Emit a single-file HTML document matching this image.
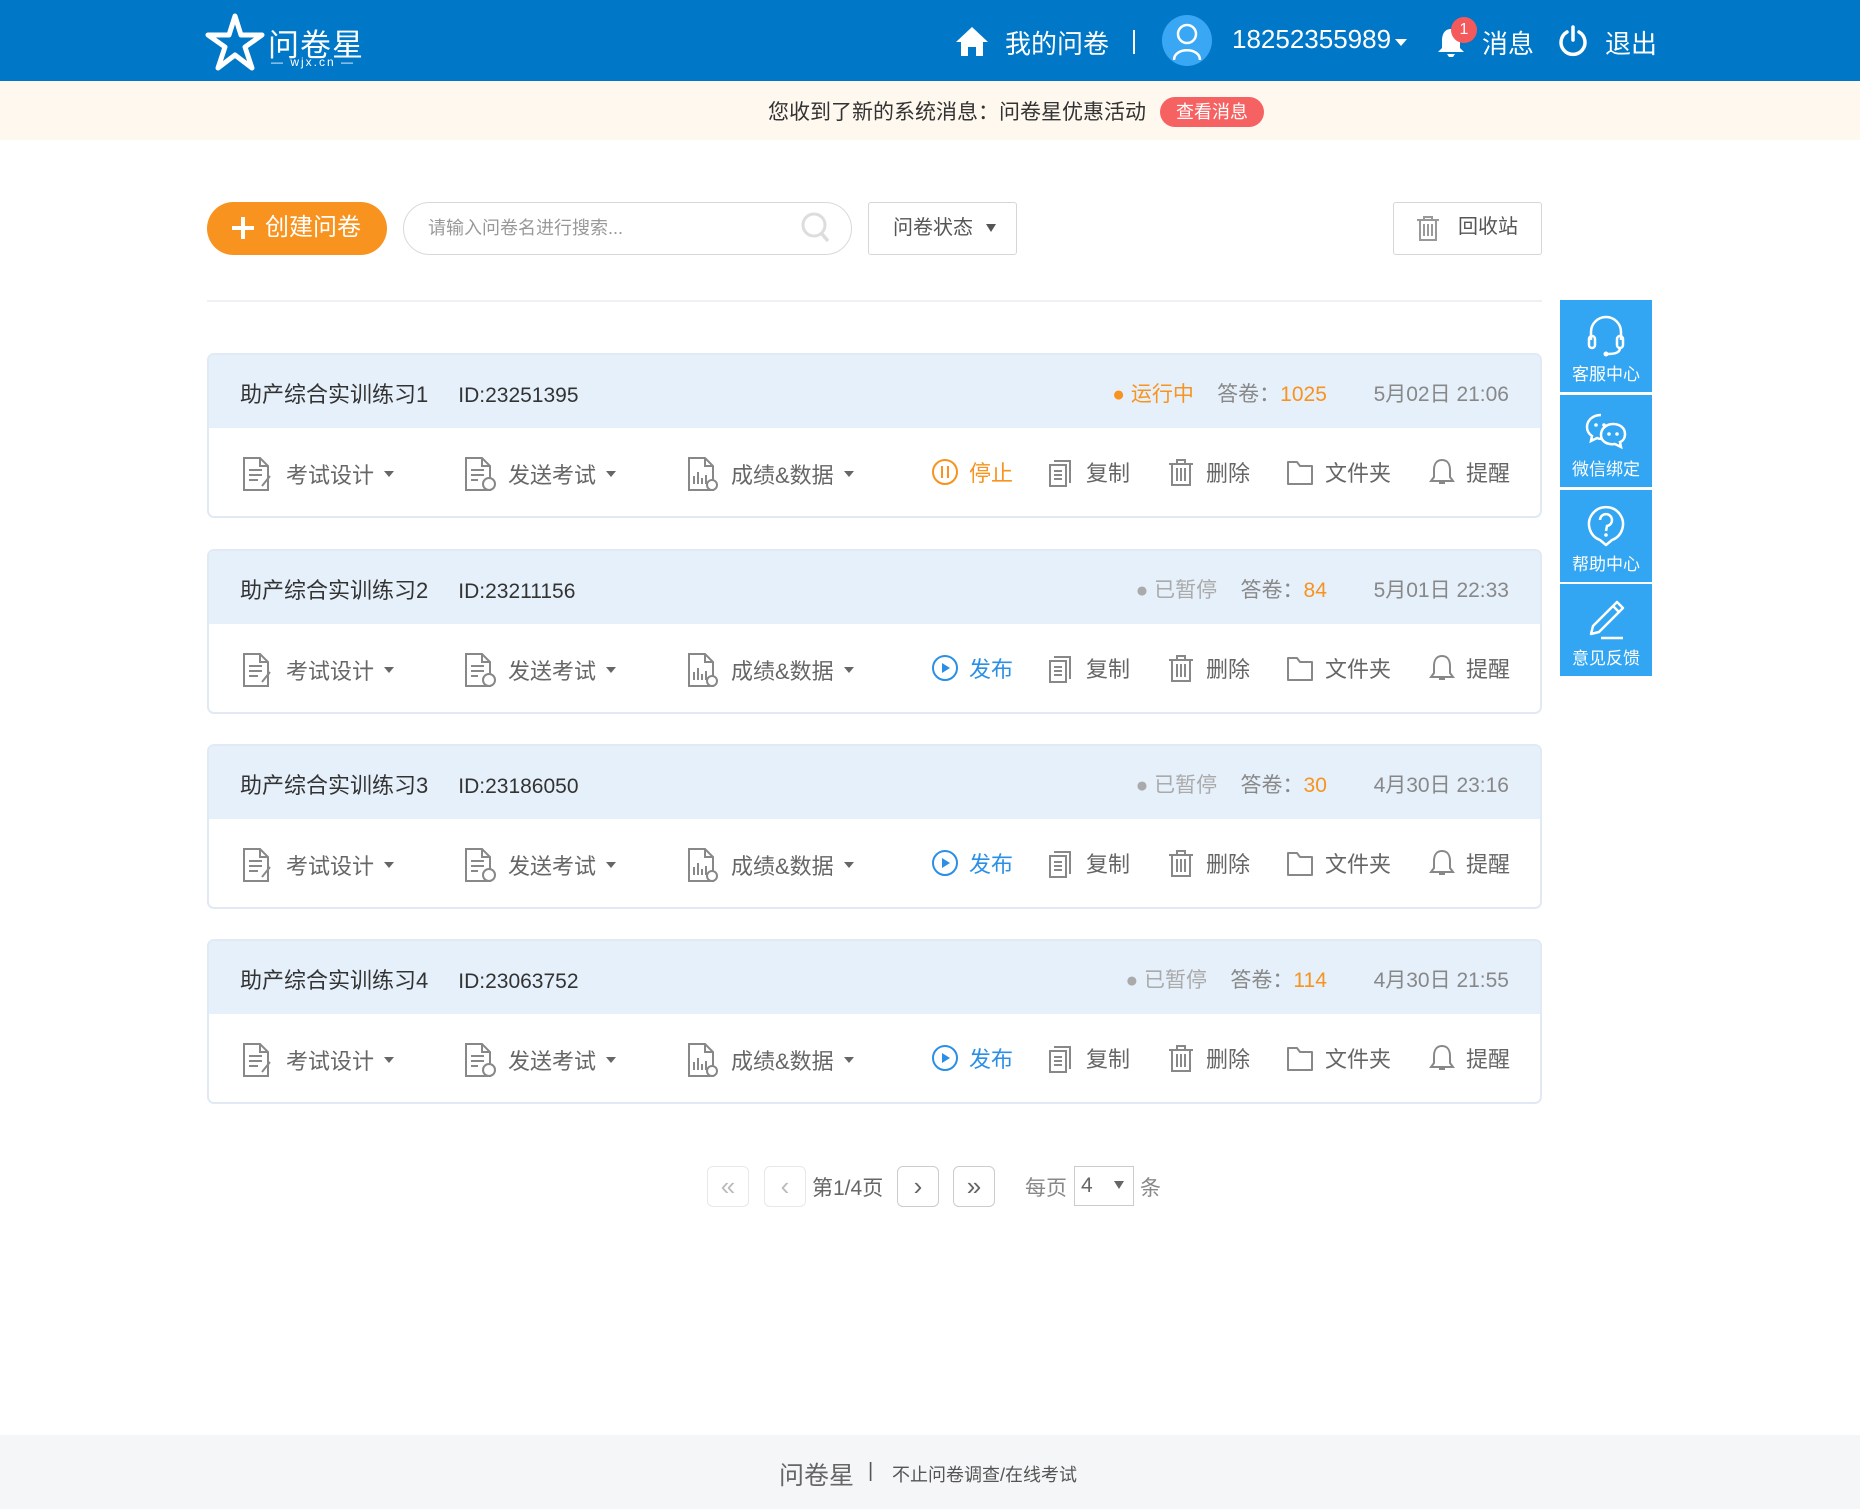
<!DOCTYPE html>
<html><head><meta charset="utf-8"><style>
*{margin:0;padding:0;box-sizing:border-box}
body{width:1860px;height:1509px;position:relative;background:#fff;font-family:"Liberation Sans","Noto Sans CJK SC",sans-serif;color:#333;overflow:hidden}
.a{position:absolute}
.hdr{left:0;top:0;width:1860px;height:81px;background:#0077c7}
.nt{left:0;top:81px;width:1860px;height:59px;background:#fff8ef}
.w{color:#fff;font-size:26px}
.card{position:absolute;left:207px;width:1335px;height:165px;border:2px solid #e1eaf4;border-radius:7px;background:#fff;overflow:hidden}
.ch{position:absolute;left:0;top:0;right:0;height:73px;background:#e6f0fa}
.tt{position:absolute;left:31px;top:22px;font-size:22px;color:#333;white-space:nowrap}
.tt span{margin-left:30px;font-size:21px}
.rt{position:absolute;right:31px;top:23px;font-size:21px;color:#888;white-space:nowrap}
.rt .o{color:#f7931e}
.act{position:absolute;top:73px;left:0;right:0;height:88px}
.it{position:absolute;top:28px;display:flex;align-items:center;font-size:22px;color:#666;white-space:nowrap}
.it svg{margin-right:10px}
.car{display:inline-block;width:0;height:0;border-left:5px solid transparent;border-right:5px solid transparent;border-top:6px solid #666;margin-left:10px}
.sb{position:absolute;left:1560px;width:92px;height:92px;background:#32a6f2;color:#fff;font-size:17px;text-align:center}
.sb svg{display:block;margin:14px auto 2px}
.pg{position:absolute;top:1166px;width:42px;height:41px;border:1px solid #ddd;border-radius:6px;color:#bbb;font-size:26px;text-align:center;line-height:38px}
</style></head><body>
<div class="a hdr"></div>
<svg class="a" style="left:205px;top:13px" width="60" height="58" viewBox="0 0 60 58"><path d="M30 3 L36 22 L57 22 L40 34 L47 55 L30 42 L13 55 L20 34 L3 22 L24 22 Z" fill="none" stroke="#fff" stroke-width="5" stroke-linejoin="round"/></svg>
<div class="a" style="left:268px;top:20px;color:#fff;font-size:31px;letter-spacing:1px">问卷星</div>
<div class="a" style="left:271px;top:55px;color:#fff;font-size:12px;letter-spacing:2px">— wjx.cn —</div>
<svg class="a" style="left:955px;top:25px" width="34" height="32" viewBox="0 0 34 32"><path d="M17 2 L33 17 L28 17 L28 31 L21 31 L21 22 L13 22 L13 31 L6 31 L6 17 L1 17 Z" fill="#fff"/></svg>
<div class="a w" style="left:1005px;top:24px">我的问卷</div>
<div class="a" style="left:1133px;top:30px;width:2px;height:24px;background:#fff"></div>
<div class="a" style="left:1162px;top:15px;width:50px;height:51px;border-radius:50%;background:#3aa7f5"></div>
<svg class="a" style="left:1162px;top:15px" width="50" height="51" viewBox="0 0 50 51"><circle cx="25" cy="19" r="9" fill="none" stroke="#fff" stroke-width="2.5"/><path d="M12 45 C12 32 38 32 38 45" fill="none" stroke="#fff" stroke-width="2.5"/></svg>
<div class="a w" style="left:1232px;top:24px">18252355989</div>
<div class="a" style="left:1395px;top:39px;border-left:6px solid transparent;border-right:6px solid transparent;border-top:7px solid #fff"></div>
<svg class="a" style="left:1436px;top:26px" width="30" height="32" viewBox="0 0 30 32"><path d="M15 3 C8 3 6 9 6 15 L6 22 L2 26 L28 26 L24 22 L24 15 C24 9 22 3 15 3Z M11 28 L19 28 L17 31 L13 31Z" fill="#fff"/></svg>
<div class="a" style="left:1451px;top:17px;width:26px;height:26px;border-radius:50%;background:#f45a5c;color:#fff;font-size:16px;text-align:center;line-height:26px">1</div>
<div class="a w" style="left:1482px;top:24px">消息</div>
<svg class="a" style="left:1557px;top:25px" width="32" height="32" viewBox="0 0 32 32"><path d="M10 7 A12 12 0 1 0 22 7" fill="none" stroke="#fff" stroke-width="3.5" stroke-linecap="round"/><path d="M16 2 L16 15" stroke="#fff" stroke-width="3.5" stroke-linecap="round"/></svg>
<div class="a w" style="left:1605px;top:24px">退出</div>

<div class="a nt"></div>
<div class="a" style="left:768px;top:96px;font-size:21px;color:#333">您收到了新的系统消息：问卷星优惠活动</div>
<div class="a" style="left:1160px;top:97px;width:104px;height:30px;border-radius:15px;background:#f66262;color:#fff;font-size:18px;text-align:center;line-height:30px">查看消息</div>

<div class="a" style="left:207px;top:202px;width:180px;height:53px;border-radius:27px;background:#f8931f;color:#fff;font-size:24px;line-height:51px;padding-left:58px">创建问卷</div>
<div class="a" style="left:232px;top:226px;width:22px;height:4px;background:#fff"></div>
<div class="a" style="left:241px;top:217px;width:4px;height:22px;background:#fff"></div>
<div class="a" style="left:403px;top:202px;width:449px;height:53px;border:1px solid #d9d9d9;border-radius:27px;color:#999;font-size:18px;line-height:51px;padding-left:24px">请输入问卷名进行搜索...</div>
<svg class="a" style="left:800px;top:211px" width="32" height="34" viewBox="0 0 32 34"><circle cx="14" cy="14" r="11" fill="none" stroke="#ddd" stroke-width="3"/><path d="M22 23 L28 30" stroke="#ddd" stroke-width="3.5"/></svg>
<div class="a" style="left:868px;top:202px;width:149px;height:53px;border:1px solid #d6d6d6;border-radius:3px;color:#555;font-size:20px;line-height:51px;padding-left:24px">问卷状态</div>
<div class="a" style="left:986px;top:224px;border-left:5px solid transparent;border-right:5px solid transparent;border-top:8px solid #555"></div>
<div class="a" style="left:1393px;top:202px;width:149px;height:53px;border:1px solid #d6d6d6;border-radius:3px;color:#555;font-size:20px;line-height:49px;padding-left:64px">回收站</div>
<svg class="a" style="left:1414px;top:214px" width="28" height="28" viewBox="0 0 28 28"><path d="M3 6 H25 M10 6 V3 H18 V6 M6 6 V26 H22 V6 M10 10 V22 M14 10 V22 M18 10 V22" fill="none" stroke="#999" stroke-width="2"/></svg>
<div class="a" style="left:207px;top:300px;width:1335px;height:2px;background:#eef0f3"></div>

<div class="sb" style="top:300px"><svg width="46" height="44" viewBox="0 0 46 44"><path d="M8 26 V18 A15 15 0 0 1 38 18 V26" fill="none" stroke="#fff" stroke-width="2.5"/><rect x="6" y="22" width="6" height="12" rx="3" fill="none" stroke="#fff" stroke-width="2.5"/><rect x="34" y="22" width="6" height="12" rx="3" fill="none" stroke="#fff" stroke-width="2.5"/><path d="M37 34 Q37 40 25 40" fill="none" stroke="#fff" stroke-width="2.5"/><circle cx="23" cy="40" r="2.5" fill="#fff"/></svg>客服中心</div>
<div class="sb" style="top:395px"><svg width="46" height="44" viewBox="0 0 46 44"><path d="M18 6 C9 6 4 12 4 18 C4 22 6 25 9 27 L8 32 L14 29 C16 30 18 30 20 30" fill="none" stroke="#fff" stroke-width="2.5"/><path d="M18 26 C18 19 24 15 30 15 C37 15 42 19 42 25 C42 29 40 32 37 33 L38 38 L32 35 C25 36 18 33 18 26Z" fill="none" stroke="#fff" stroke-width="2.5"/><circle cx="13" cy="16" r="1.8" fill="#fff"/><circle cx="21" cy="16" r="1.8" fill="#fff"/><circle cx="26" cy="25" r="1.8" fill="#fff"/><circle cx="34" cy="25" r="1.8" fill="#fff"/></svg>微信绑定</div>
<div class="sb" style="top:490px"><svg width="46" height="44" viewBox="0 0 46 44"><path d="M23 41 L17 36 A17 17 0 1 1 29 36 Z" fill="none" stroke="#fff" stroke-width="2.5" stroke-linejoin="round"/><path d="M17 16 A6 6 0 1 1 24 22 L23 27" fill="none" stroke="#fff" stroke-width="2.5"/><circle cx="23" cy="31" r="1.8" fill="#fff"/></svg>帮助中心</div>
<div class="sb" style="top:584px"><svg width="46" height="44" viewBox="0 0 46 44"><path d="M34 4 L40 10 L16 34 L8 36 L10 28 Z M30 8 L36 14" fill="none" stroke="#fff" stroke-width="2.5" stroke-linejoin="round"/><path d="M18 40 H40" stroke="#fff" stroke-width="2.5"/></svg>意见反馈</div>

<div class="card" style="top:353px"><div class="ch"></div>
<div class="tt">助产综合实训练习1<span>ID:23251395</span></div>
<div class="rt"><span class="o">● 运行中</span>&nbsp;&nbsp;&nbsp;&nbsp;答卷：<span class="o">1025</span>&nbsp;&nbsp;&nbsp;&nbsp;&nbsp;&nbsp;&nbsp;&nbsp;5月02日 21:06</div>
<div class="act">
<div class="it" style="left:31px"><svg width="36" height="36" viewBox="0 0 36 36"><path d="M4 2 H20 L28 10 V34 H4 Z M20 2 V10 H28 M9 14 H22 M9 19 H22 M9 24 H18 M22 30 L30 20" fill="none" stroke="#888" stroke-width="2"/></svg>考试设计<i class="car"></i></div>
<div class="it" style="left:253px"><svg width="36" height="36" viewBox="0 0 36 36"><path d="M4 2 H20 L28 10 V34 H4 Z M20 2 V10 H28 M9 14 H22 M9 19 H22 M9 24 H16" fill="none" stroke="#888" stroke-width="2"/><circle cx="27" cy="28" r="6" fill="#fff" stroke="#888" stroke-width="2"/></svg>发送考试<i class="car"></i></div>
<div class="it" style="left:476px"><svg width="36" height="36" viewBox="0 0 36 36"><path d="M4 2 H20 L28 10 V34 H4 Z M20 2 V10 H28 M9 28 V20 M13 28 V16 M17 28 V22 M21 28 V19" fill="none" stroke="#888" stroke-width="2"/><circle cx="27" cy="29" r="5" fill="#fff" stroke="#888" stroke-width="2"/></svg>成绩&amp;数据<i class="car"></i></div>
<div class="it" style="left:722px;color:#f7931e"><svg width="28" height="28" viewBox="0 0 28 28"><circle cx="14" cy="14" r="12" fill="none" stroke="#f7931e" stroke-width="2"/><path d="M11 8 V20 M17 8 V20" stroke="#f7931e" stroke-width="2"/></svg>停止</div>
<div class="it" style="left:837px"><svg width="30" height="30" viewBox="0 0 30 30"><path d="M8 4 H24 V26 M4 8 H20 V29 H4 Z M8 14 H16 M8 18 H16 M8 22 H16" fill="none" stroke="#888" stroke-width="2"/></svg>复制</div>
<div class="it" style="left:957px"><svg width="30" height="30" viewBox="0 0 30 30"><path d="M3 7 H27 M11 7 V3 H19 V7 M6 7 V28 H24 V7 M11 11 V24 M15 11 V24 M19 11 V24" fill="none" stroke="#888" stroke-width="2"/></svg>删除</div>
<div class="it" style="left:1076px"><svg width="30" height="30" viewBox="0 0 30 30"><path d="M3 5 H12 L15 9 H27 V27 H3 Z" fill="none" stroke="#888" stroke-width="2" stroke-linejoin="round"/></svg>文件夹</div>
<div class="it" style="left:1219px"><svg width="28" height="30" viewBox="0 0 28 30"><path d="M14 3 C8 3 6 8 6 13 V20 L3 24 H25 L22 20 V13 C22 8 20 3 14 3Z M11 26 H17" fill="none" stroke="#888" stroke-width="2"/></svg>提醒</div>
</div></div>

<div class="card" style="top:549px"><div class="ch"></div>
<div class="tt">助产综合实训练习2<span>ID:23211156</span></div>
<div class="rt"><span style="color:#aaa">● 已暂停</span>&nbsp;&nbsp;&nbsp;&nbsp;答卷：<span class="o">84</span>&nbsp;&nbsp;&nbsp;&nbsp;&nbsp;&nbsp;&nbsp;&nbsp;5月01日 22:33</div>
<div class="act">
<div class="it" style="left:31px"><svg width="36" height="36" viewBox="0 0 36 36"><path d="M4 2 H20 L28 10 V34 H4 Z M20 2 V10 H28 M9 14 H22 M9 19 H22 M9 24 H18 M22 30 L30 20" fill="none" stroke="#888" stroke-width="2"/></svg>考试设计<i class="car"></i></div>
<div class="it" style="left:253px"><svg width="36" height="36" viewBox="0 0 36 36"><path d="M4 2 H20 L28 10 V34 H4 Z M20 2 V10 H28 M9 14 H22 M9 19 H22 M9 24 H16" fill="none" stroke="#888" stroke-width="2"/><circle cx="27" cy="28" r="6" fill="#fff" stroke="#888" stroke-width="2"/></svg>发送考试<i class="car"></i></div>
<div class="it" style="left:476px"><svg width="36" height="36" viewBox="0 0 36 36"><path d="M4 2 H20 L28 10 V34 H4 Z M20 2 V10 H28 M9 28 V20 M13 28 V16 M17 28 V22 M21 28 V19" fill="none" stroke="#888" stroke-width="2"/><circle cx="27" cy="29" r="5" fill="#fff" stroke="#888" stroke-width="2"/></svg>成绩&amp;数据<i class="car"></i></div>
<div class="it" style="left:722px;color:#2b8fe6"><svg width="28" height="28" viewBox="0 0 28 28"><circle cx="14" cy="14" r="12" fill="none" stroke="#2b8fe6" stroke-width="2"/><path d="M11 9 L19 14 L11 19Z" fill="#2b8fe6"/></svg>发布</div>
<div class="it" style="left:837px"><svg width="30" height="30" viewBox="0 0 30 30"><path d="M8 4 H24 V26 M4 8 H20 V29 H4 Z M8 14 H16 M8 18 H16 M8 22 H16" fill="none" stroke="#888" stroke-width="2"/></svg>复制</div>
<div class="it" style="left:957px"><svg width="30" height="30" viewBox="0 0 30 30"><path d="M3 7 H27 M11 7 V3 H19 V7 M6 7 V28 H24 V7 M11 11 V24 M15 11 V24 M19 11 V24" fill="none" stroke="#888" stroke-width="2"/></svg>删除</div>
<div class="it" style="left:1076px"><svg width="30" height="30" viewBox="0 0 30 30"><path d="M3 5 H12 L15 9 H27 V27 H3 Z" fill="none" stroke="#888" stroke-width="2" stroke-linejoin="round"/></svg>文件夹</div>
<div class="it" style="left:1219px"><svg width="28" height="30" viewBox="0 0 28 30"><path d="M14 3 C8 3 6 8 6 13 V20 L3 24 H25 L22 20 V13 C22 8 20 3 14 3Z M11 26 H17" fill="none" stroke="#888" stroke-width="2"/></svg>提醒</div>
</div></div>

<div class="card" style="top:744px"><div class="ch"></div>
<div class="tt">助产综合实训练习3<span>ID:23186050</span></div>
<div class="rt"><span style="color:#aaa">● 已暂停</span>&nbsp;&nbsp;&nbsp;&nbsp;答卷：<span class="o">30</span>&nbsp;&nbsp;&nbsp;&nbsp;&nbsp;&nbsp;&nbsp;&nbsp;4月30日 23:16</div>
<div class="act">
<div class="it" style="left:31px"><svg width="36" height="36" viewBox="0 0 36 36"><path d="M4 2 H20 L28 10 V34 H4 Z M20 2 V10 H28 M9 14 H22 M9 19 H22 M9 24 H18 M22 30 L30 20" fill="none" stroke="#888" stroke-width="2"/></svg>考试设计<i class="car"></i></div>
<div class="it" style="left:253px"><svg width="36" height="36" viewBox="0 0 36 36"><path d="M4 2 H20 L28 10 V34 H4 Z M20 2 V10 H28 M9 14 H22 M9 19 H22 M9 24 H16" fill="none" stroke="#888" stroke-width="2"/><circle cx="27" cy="28" r="6" fill="#fff" stroke="#888" stroke-width="2"/></svg>发送考试<i class="car"></i></div>
<div class="it" style="left:476px"><svg width="36" height="36" viewBox="0 0 36 36"><path d="M4 2 H20 L28 10 V34 H4 Z M20 2 V10 H28 M9 28 V20 M13 28 V16 M17 28 V22 M21 28 V19" fill="none" stroke="#888" stroke-width="2"/><circle cx="27" cy="29" r="5" fill="#fff" stroke="#888" stroke-width="2"/></svg>成绩&amp;数据<i class="car"></i></div>
<div class="it" style="left:722px;color:#2b8fe6"><svg width="28" height="28" viewBox="0 0 28 28"><circle cx="14" cy="14" r="12" fill="none" stroke="#2b8fe6" stroke-width="2"/><path d="M11 9 L19 14 L11 19Z" fill="#2b8fe6"/></svg>发布</div>
<div class="it" style="left:837px"><svg width="30" height="30" viewBox="0 0 30 30"><path d="M8 4 H24 V26 M4 8 H20 V29 H4 Z M8 14 H16 M8 18 H16 M8 22 H16" fill="none" stroke="#888" stroke-width="2"/></svg>复制</div>
<div class="it" style="left:957px"><svg width="30" height="30" viewBox="0 0 30 30"><path d="M3 7 H27 M11 7 V3 H19 V7 M6 7 V28 H24 V7 M11 11 V24 M15 11 V24 M19 11 V24" fill="none" stroke="#888" stroke-width="2"/></svg>删除</div>
<div class="it" style="left:1076px"><svg width="30" height="30" viewBox="0 0 30 30"><path d="M3 5 H12 L15 9 H27 V27 H3 Z" fill="none" stroke="#888" stroke-width="2" stroke-linejoin="round"/></svg>文件夹</div>
<div class="it" style="left:1219px"><svg width="28" height="30" viewBox="0 0 28 30"><path d="M14 3 C8 3 6 8 6 13 V20 L3 24 H25 L22 20 V13 C22 8 20 3 14 3Z M11 26 H17" fill="none" stroke="#888" stroke-width="2"/></svg>提醒</div>
</div></div>

<div class="card" style="top:939px"><div class="ch"></div>
<div class="tt">助产综合实训练习4<span>ID:23063752</span></div>
<div class="rt"><span style="color:#aaa">● 已暂停</span>&nbsp;&nbsp;&nbsp;&nbsp;答卷：<span class="o">114</span>&nbsp;&nbsp;&nbsp;&nbsp;&nbsp;&nbsp;&nbsp;&nbsp;4月30日 21:55</div>
<div class="act">
<div class="it" style="left:31px"><svg width="36" height="36" viewBox="0 0 36 36"><path d="M4 2 H20 L28 10 V34 H4 Z M20 2 V10 H28 M9 14 H22 M9 19 H22 M9 24 H18 M22 30 L30 20" fill="none" stroke="#888" stroke-width="2"/></svg>考试设计<i class="car"></i></div>
<div class="it" style="left:253px"><svg width="36" height="36" viewBox="0 0 36 36"><path d="M4 2 H20 L28 10 V34 H4 Z M20 2 V10 H28 M9 14 H22 M9 19 H22 M9 24 H16" fill="none" stroke="#888" stroke-width="2"/><circle cx="27" cy="28" r="6" fill="#fff" stroke="#888" stroke-width="2"/></svg>发送考试<i class="car"></i></div>
<div class="it" style="left:476px"><svg width="36" height="36" viewBox="0 0 36 36"><path d="M4 2 H20 L28 10 V34 H4 Z M20 2 V10 H28 M9 28 V20 M13 28 V16 M17 28 V22 M21 28 V19" fill="none" stroke="#888" stroke-width="2"/><circle cx="27" cy="29" r="5" fill="#fff" stroke="#888" stroke-width="2"/></svg>成绩&amp;数据<i class="car"></i></div>
<div class="it" style="left:722px;color:#2b8fe6"><svg width="28" height="28" viewBox="0 0 28 28"><circle cx="14" cy="14" r="12" fill="none" stroke="#2b8fe6" stroke-width="2"/><path d="M11 9 L19 14 L11 19Z" fill="#2b8fe6"/></svg>发布</div>
<div class="it" style="left:837px"><svg width="30" height="30" viewBox="0 0 30 30"><path d="M8 4 H24 V26 M4 8 H20 V29 H4 Z M8 14 H16 M8 18 H16 M8 22 H16" fill="none" stroke="#888" stroke-width="2"/></svg>复制</div>
<div class="it" style="left:957px"><svg width="30" height="30" viewBox="0 0 30 30"><path d="M3 7 H27 M11 7 V3 H19 V7 M6 7 V28 H24 V7 M11 11 V24 M15 11 V24 M19 11 V24" fill="none" stroke="#888" stroke-width="2"/></svg>删除</div>
<div class="it" style="left:1076px"><svg width="30" height="30" viewBox="0 0 30 30"><path d="M3 5 H12 L15 9 H27 V27 H3 Z" fill="none" stroke="#888" stroke-width="2" stroke-linejoin="round"/></svg>文件夹</div>
<div class="it" style="left:1219px"><svg width="28" height="30" viewBox="0 0 28 30"><path d="M14 3 C8 3 6 8 6 13 V20 L3 24 H25 L22 20 V13 C22 8 20 3 14 3Z M11 26 H17" fill="none" stroke="#888" stroke-width="2"/></svg>提醒</div>
</div></div>

<div class="pg" style="left:707px;border-color:#e8e8e8">«</div>
<div class="pg" style="left:764px;border-color:#e8e8e8">‹</div>
<div class="a" style="left:812px;top:1172px;font-size:21px;color:#666">第1/4页</div>
<div class="pg" style="left:897px;color:#666;border-color:#ccc">›</div>
<div class="pg" style="left:953px;color:#666;border-color:#ccc">»</div>
<div class="a" style="left:1025px;top:1172px;font-size:21px;color:#888">每页</div>
<div class="a" style="left:1074px;top:1166px;width:60px;height:40px;border:1px solid #ccc;font-size:21px;color:#666;line-height:38px;padding-left:6px">4</div>
<div class="a" style="left:1114px;top:1181px;border-left:5px solid transparent;border-right:5px solid transparent;border-top:8px solid #666"></div>
<div class="a" style="left:1140px;top:1172px;font-size:21px;color:#888">条</div>

<div class="a" style="left:0;top:1435px;width:1860px;height:74px;background:#f5f6f7"></div>
<div class="a" style="left:779px;top:1456px;font-size:25px;color:#666">问卷星</div>
<div class="a" style="left:868px;top:1460px;font-size:20px;color:#555">|</div>
<div class="a" style="left:892px;top:1461px;font-size:18px;color:#555">不止问卷调查/在线考试</div>
</body></html>
